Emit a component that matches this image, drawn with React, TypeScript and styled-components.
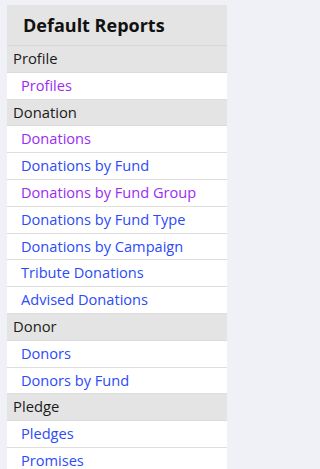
import * as React from "react";
import styled, { createGlobalStyle } from "styled-components";

const GlobalStyle = createGlobalStyle`
  html, body {
    margin: 0;
    padding: 0;
    background: #eff1f6;
  }
  body {
    font-family: "Open Sans", "Noto Sans", sans-serif;
    -webkit-font-smoothing: antialiased;
  }
`;

const Page = styled.div`
  padding: 5px 6px 0 7px;
`;

const Panel = styled.div`
  width: 220px;
  background: #ffffff;
  display: flex;
  flex-direction: column;
`;

const Title = styled.div`
  background: #e4e4e4;
  border-bottom: 1px solid #d8d8d8;
  height: 40px;
  padding-left: 16px;
  display: flex;
  align-items: center;
  font-size: 18px;
  font-weight: bold;
  color: #111111;
`;

const Section = styled.div`
  background: #e4e4e4;
  border-bottom: 1px solid #dadada;
  padding: 3px 6px;
  font-size: 14.8px;
  line-height: 19.8px;
  color: #1a1a1a;
`;

const Item = styled.a<{ $visited?: boolean }>`
  display: block;
  border-bottom: 1px solid #dedede;
  padding: 3px 14px;
  font-size: 14.6px;
  line-height: 19.8px;
  text-decoration: none;
  white-space: nowrap;
  color: ${(p) => (p.$visited ? "#9a2cf2" : "#2c4bf7")};
`;

type Group = { name: string; items: { label: string; visited?: boolean }[] };

const groups: Group[] = [
  { name: "Profile", items: [{ label: "Profiles", visited: true }] },
  {
    name: "Donation",
    items: [
      { label: "Donations", visited: true },
      { label: "Donations by Fund" },
      { label: "Donations by Fund Group", visited: true },
      { label: "Donations by Fund Type" },
      { label: "Donations by Campaign" },
      { label: "Tribute Donations" },
      { label: "Advised Donations" },
    ],
  },
  { name: "Donor", items: [{ label: "Donors" }, { label: "Donors by Fund" }] },
  { name: "Pledge", items: [{ label: "Pledges" }, { label: "Promises" }] },
];

export default function App() {
  return (
    <>
      <GlobalStyle />
      <Page>
        <Panel>
          <Title>Default Reports</Title>
          {groups.map((g) => (
            <React.Fragment key={g.name}>
              <Section>{g.name}</Section>
              {g.items.map((it) => (
                <Item key={it.label} href="#" $visited={it.visited}>
                  {it.label}
                </Item>
              ))}
            </React.Fragment>
          ))}
        </Panel>
      </Page>
    </>
  );
}
